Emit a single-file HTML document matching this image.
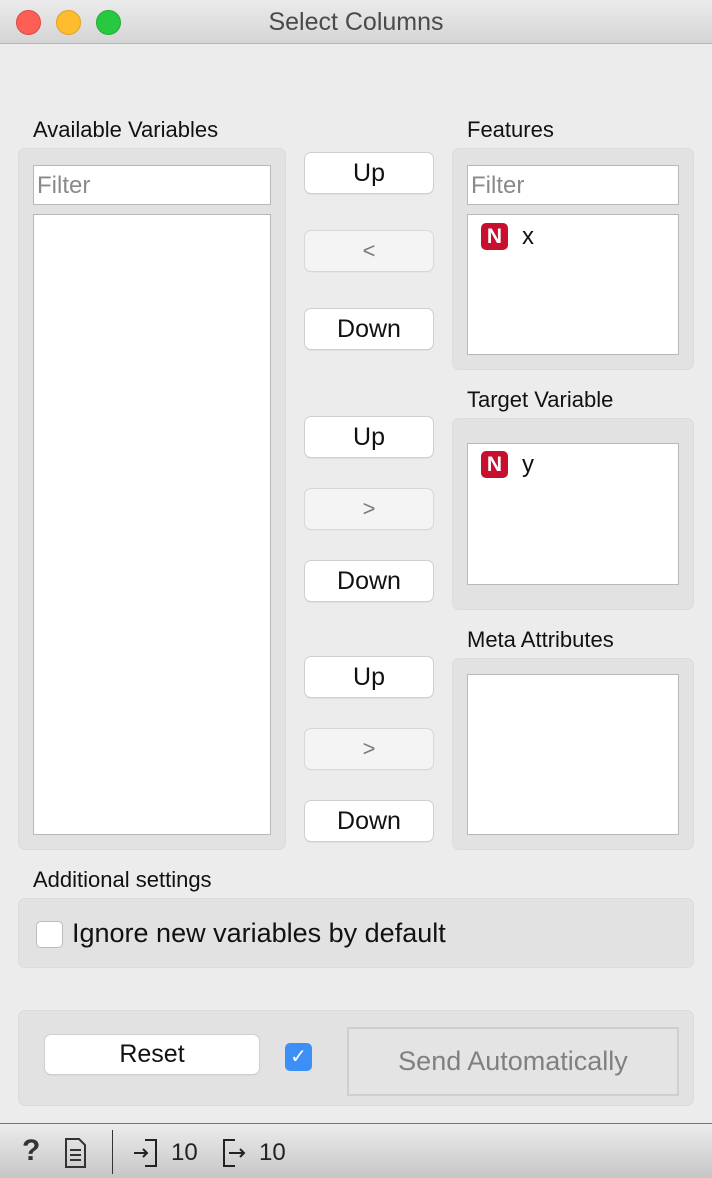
<!DOCTYPE html>
<html><head><style>
*{margin:0;padding:0;box-sizing:border-box}
body{width:712px;height:1178px;background:#ececec;font-family:"Liberation Sans",sans-serif;position:relative;overflow:hidden}
.a{position:absolute}
.title{left:0;top:0;width:712px;height:44px;background:linear-gradient(#ebebeb,#d5d5d5);border-bottom:1px solid #b5b5b5;text-align:center;font-size:25px;line-height:44px;color:#4a4a4a}
.dot{top:10px;width:25px;height:25px;border-radius:50%}
.lbl{font-size:22px;color:#111}
.box{background:#e2e2e2;border:1px solid #dcdcdc;border-radius:7px}
.wh{background:#fff;border:1px solid #b8b8b8}
.flt{font-size:24px;color:#8a8a8a;padding-left:3px;line-height:40px}
.btn{left:305px;width:128px;height:40px;background:#fff;border-radius:6px;box-shadow:0 0 0 1px #cfcfcf,0 1px 1px #aaa;text-align:center;font-size:25px;line-height:40px;color:#111}
.dis{background:#f4f4f4;color:#7a7a7a;font-size:22px;box-shadow:0 0 0 1px #d8d8d8,0 1px 1px #c0c0c0}
.n{width:27px;height:27px;background:#c8102e;border-radius:5px;color:#fff;font-weight:bold;font-size:21px;text-align:center;line-height:27px}
.it{font-size:24px;color:#111}
</style></head><body>
<div class="a title">Select Columns</div>
<div class="a dot" style="left:16px;background:#fd5f57;border:1px solid #e2463f"></div>
<div class="a dot" style="left:56px;background:#febc2e;border:1px solid #e0a123"></div>
<div class="a dot" style="left:96px;background:#28c840;border:1px solid #1fae33"></div>

<div class="a lbl" style="left:33px;top:117px">Available Variables</div>
<div class="a box" style="left:18px;top:148px;width:268px;height:702px"></div>
<div class="a wh flt" style="left:33px;top:165px;width:238px;height:40px">Filter</div>
<div class="a wh" style="left:33px;top:214px;width:238px;height:621px"></div>

<div class="a btn" style="top:153px">Up</div>
<div class="a btn dis" style="top:231px">&lt;</div>
<div class="a btn" style="top:309px">Down</div>
<div class="a btn" style="top:417px">Up</div>
<div class="a btn dis" style="top:489px">&gt;</div>
<div class="a btn" style="top:561px">Down</div>
<div class="a btn" style="top:657px">Up</div>
<div class="a btn dis" style="top:729px">&gt;</div>
<div class="a btn" style="top:801px">Down</div>

<div class="a lbl" style="left:467px;top:117px">Features</div>
<div class="a box" style="left:452px;top:148px;width:242px;height:222px"></div>
<div class="a wh flt" style="left:467px;top:165px;width:212px;height:40px">Filter</div>
<div class="a wh" style="left:467px;top:214px;width:212px;height:141px"></div>
<div class="a n" style="left:481px;top:223px">N</div>
<div class="a it" style="left:522px;top:223px">x</div>

<div class="a lbl" style="left:467px;top:387px">Target Variable</div>
<div class="a box" style="left:452px;top:418px;width:242px;height:192px"></div>
<div class="a wh" style="left:467px;top:443px;width:212px;height:142px"></div>
<div class="a n" style="left:481px;top:451px">N</div>
<div class="a it" style="left:522px;top:451px">y</div>

<div class="a lbl" style="left:467px;top:627px">Meta Attributes</div>
<div class="a box" style="left:452px;top:658px;width:242px;height:192px"></div>
<div class="a wh" style="left:467px;top:674px;width:212px;height:161px"></div>

<div class="a lbl" style="left:33px;top:867px">Additional settings</div>
<div class="a box" style="left:18px;top:898px;width:676px;height:70px"></div>
<div class="a" style="left:36px;top:921px;width:27px;height:27px;background:#fff;border:1px solid #bdbdbd;border-radius:5px"></div>
<div class="a" style="left:72px;top:918px;font-size:27px;color:#111">Ignore new variables by default</div>

<div class="a box" style="left:18px;top:1010px;width:676px;height:96px"></div>
<div class="a btn" style="left:45px;top:1035px;width:214px;height:39px;line-height:39px">Reset</div>
<div class="a" style="left:285px;top:1043px;width:27px;height:28px;background:#3b8ff7;border-radius:5px;color:#fff;text-align:center;font-size:20px;line-height:28px">✓</div>
<div class="a" style="left:347px;top:1027px;width:332px;height:69px;border:2px solid #cfcfcf;background:#e4e4e4;text-align:center;line-height:65px;font-size:27px;color:#808080">Send Automatically</div>

<div class="a" style="left:0;top:1123px;width:712px;height:55px;background:linear-gradient(#ececec,#c6c6c6);border-top:1px solid #777"></div>
<div class="a" style="left:22px;top:1134px;font-size:30px;font-weight:bold;color:#333">?</div>
<svg class="a" style="left:64px;top:1138px" width="24" height="30" viewBox="0 0 24 30"><path d="M2 1h13l6 6v22H2z" fill="none" stroke="#333" stroke-width="2"/><path d="M6 12h11M6 17h11M6 22h11" stroke="#333" stroke-width="2"/></svg>
<div class="a" style="left:112px;top:1130px;width:1px;height:44px;background:#333"></div>
<svg class="a" style="left:133px;top:1139px" width="26" height="28" viewBox="0 0 26 28"><path d="M12 1h11v26H12" fill="none" stroke="#222" stroke-width="2"/><path d="M1 14h13M10 10l4 4-4 4" fill="none" stroke="#222" stroke-width="2"/></svg>
<div class="a" style="left:171px;top:1139px;font-size:24px;color:#222">10</div>
<svg class="a" style="left:222px;top:1139px" width="26" height="28" viewBox="0 0 26 28"><path d="M13 1H2v26h11" fill="none" stroke="#222" stroke-width="2"/><path d="M7 14h15M18 10l4 4-4 4" fill="none" stroke="#222" stroke-width="2"/></svg>
<div class="a" style="left:259px;top:1139px;font-size:24px;color:#222">10</div>
</body></html>
